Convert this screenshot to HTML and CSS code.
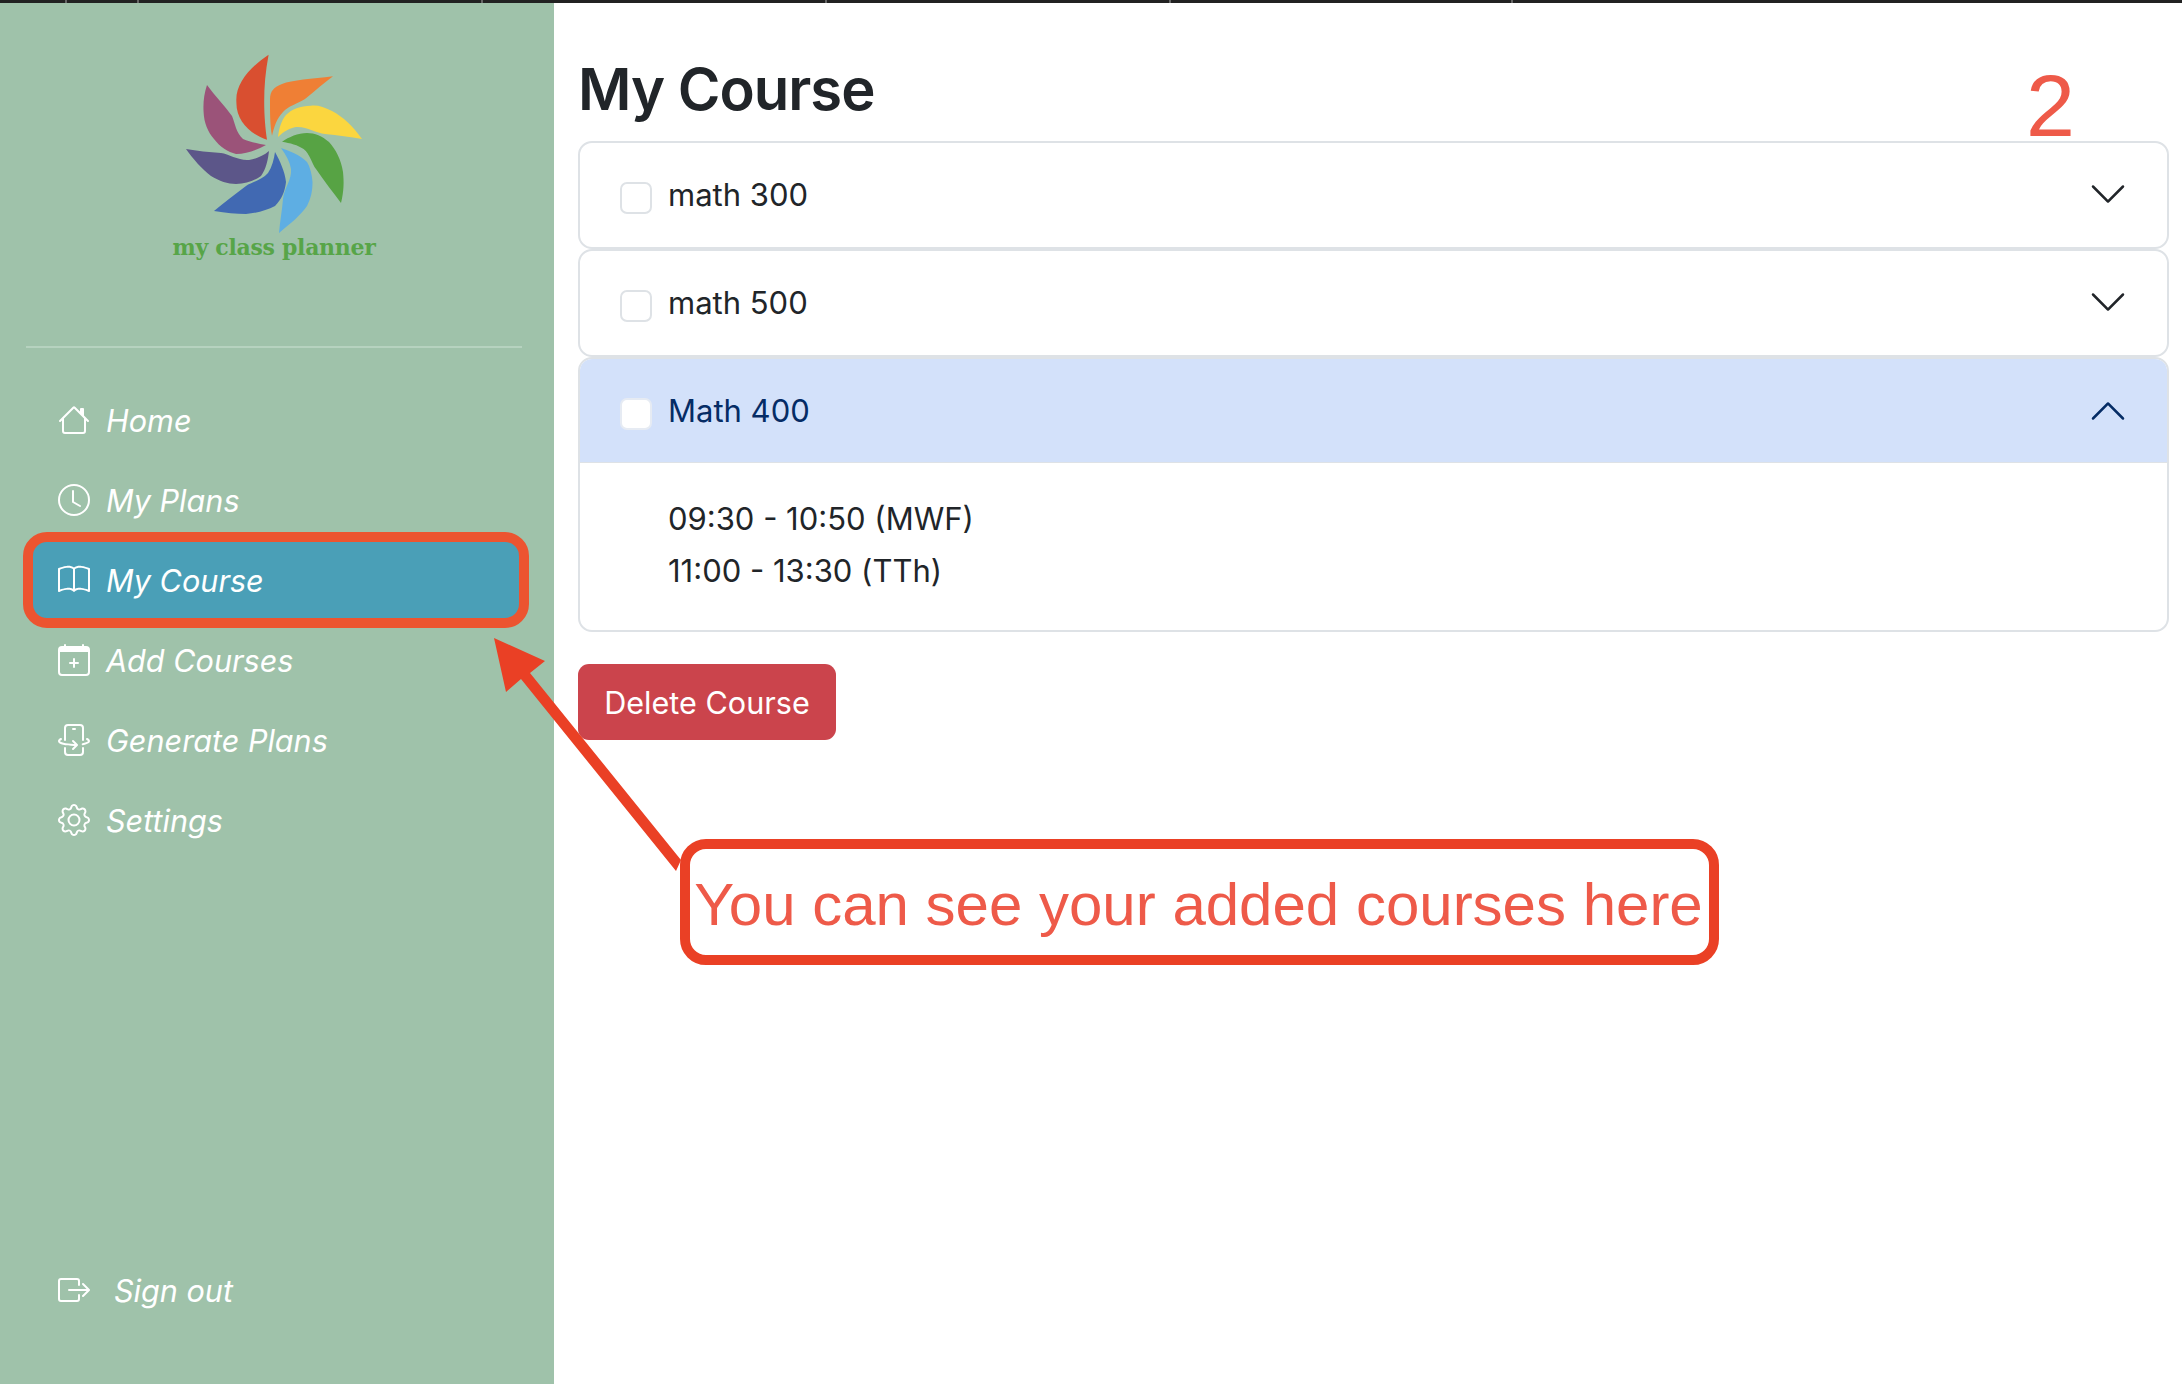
FILE: index.html
```html
<!DOCTYPE html>
<html lang="en">
<head>
<meta charset="utf-8">
<title>My Course</title>
<link rel="stylesheet" href="styles.css">
</head>
<body>
<div class="page">
  <div class="tabstrip"></div>
  <div class="shell">
    <aside class="sidebar">
      <div class="brand">
        <svg class="logo" viewBox="182 52 190 186" aria-hidden="true">
          <path fill="#d94f30" d="M268.6 55.7C250 68 235 85 236.4 103C236 122 250 135 267 140.7C264 120 262 90 268.6 55.7Z"/>
          <path fill="#ef7f35" d="M333 77.3C312 80 292 81 282 85C274 88 270 92 270 100C270 115 270 125 272 136.7C274 128 277 119 283 113C288 107 297 105 305 100C315 92 324 84 333 77.3Z"/>
          <path fill="#fbd63f" d="M362 140C352 126 343 118 332 112C324 108 318 106 311 106.7C300 107 292 110 286 116C281 122 279 130 278 138C284 132 290 129 296 128C306 127 316 134 325 135C338 136 350 138 362 140Z"/>
          <path fill="#57a344" d="M341 204C344 192 344 183 343 173C341 160 336 151 329 143C322 137 315 134 307 134C298 134 289 138 282 142.7C290 144 298 146 303.6 150C310 155 312 165 316 170C324 182 333 193 341 204Z"/>
          <path fill="#5eaee3" d="M279 234C291 224 301 216 307 207C311 199 312.5 192 312.5 183C312 175 310 168 307 163C300 156 290 152 281 149C286 156 290 163 291 170C292 181 284 189 283 200C282 212 280 222 279 234Z"/>
          <path fill="#4169b2" d="M214 212C226 214 236 215 246 215C258 214 267 211 275 207C282 200 285 192 286 183C285 173 280 162 275 153C274 160 272 168 268 174C262 181 252 183 246 187C235 195 224 204 214 212Z"/>
          <path fill="#5c5689" d="M186 150C193 160 202 170 211 177C219 182 228 185 236 185C246 185 254 182 261 177C266 170 268 161 269 152C263 157 256 160 249 161C239 162 229 155 221 154C209 153 197 152 186 150Z"/>
          <path fill="#9b5379" d="M207 86C204 95 203 104 203.6 113C204 124 208 133 214 140C220 148 228 153 236 155C247 155 257 151 266 146C259 145 250 143 243 140C236 134 235 124 232 117C224 106 215 97 207 86Z"/>
        </svg>
        <div class="brand-name">my class planner</div>
      </div>
      <nav class="nav">
        <a class="nav-item">
          <svg class="icon" viewBox="0 0 16 16"><path d="M8.707 1.5a1 1 0 0 0-1.414 0L.646 8.146a.5.5 0 0 0 .708.708L2 8.207V13.5A1.5 1.5 0 0 0 3.5 15h9a1.5 1.5 0 0 0 1.5-1.5V8.207l.646.647a.5.5 0 0 0 .708-.708L13 5.793V2.5a.5.5 0 0 0-.5-.5h-1a.5.5 0 0 0-.5.5v1.293zM13 7.207V13.5a.5.5 0 0 1-.5.5h-9a.5.5 0 0 1-.5-.5V7.207l5-5z"/></svg>
          <span>Home</span>
        </a>
        <a class="nav-item">
          <svg class="icon" viewBox="0 0 16 16"><path d="M8 3.5a.5.5 0 0 0-1 0V9a.5.5 0 0 0 .252.434l3.5 2a.5.5 0 0 0 .496-.868L8 8.71z"/><path d="M8 16A8 8 0 1 0 8 0a8 8 0 0 0 0 16m7-8A7 7 0 1 1 1 8a7 7 0 0 1 14 0"/></svg>
          <span>My Plans</span>
        </a>
        <a class="nav-item is-active">
          <svg class="icon" viewBox="0 0 16 16"><path d="M1 2.828c.885-.37 2.154-.769 3.388-.893 1.33-.134 2.458.063 3.112.752v9.746c-.935-.53-2.12-.603-3.213-.493-1.18.12-2.37.461-3.287.811zm7.5-.141c.654-.689 1.782-.886 3.112-.752 1.234.124 2.503.523 3.388.893v9.923c-.918-.35-2.107-.692-3.287-.81-1.094-.111-2.278-.039-3.213.492zM8 1.783C7.015.936 5.587.81 4.287.94c-1.514.153-3.042.672-3.994 1.105A.5.5 0 0 0 0 2.5v11a.5.5 0 0 0 .707.455c.882-.4 2.303-.881 3.68-1.02 1.409-.142 2.59.087 3.223.877a.5.5 0 0 0 .78 0c.633-.79 1.814-1.019 3.222-.877 1.378.139 2.8.62 3.681 1.02A.5.5 0 0 0 16 13.5v-11a.5.5 0 0 0-.293-.455c-.952-.433-2.48-.952-3.994-1.105C10.413.809 8.985.936 8 1.783"/></svg>
          <span>My Course</span>
        </a>
        <a class="nav-item">
          <svg class="icon" viewBox="0 0 16 16"><path d="M8 7a.5.5 0 0 1 .5.5V9H10a.5.5 0 0 1 0 1H8.5v1.5a.5.5 0 0 1-1 0V10H6a.5.5 0 0 1 0-1h1.5V7.5A.5.5 0 0 1 8 7"/><path d="M3.5 0a.5.5 0 0 1 .5.5V1h8V.5a.5.5 0 0 1 1 0V1h1a2 2 0 0 1 2 2v11a2 2 0 0 1-2 2H2a2 2 0 0 1-2-2V3a2 2 0 0 1 2-2h1V.5a.5.5 0 0 1 .5-.5M1 4v10a1 1 0 0 0 1 1h12a1 1 0 0 0 1-1V4z"/></svg>
          <span>Add Courses</span>
        </a>
        <a class="nav-item">
          <svg class="icon" viewBox="0 0 16 16"><path d="M11 1H5a1 1 0 0 0-1 1v6a.5.5 0 0 1-1 0V2a2 2 0 0 1 2-2h6a2 2 0 0 1 2 2v6a.5.5 0 0 1-1 0V2a1 1 0 0 0-1-1m1 13a1 1 0 0 1-1 1H5a1 1 0 0 1-1-1v-2a.5.5 0 0 0-1 0v2a2 2 0 0 0 2 2h6a2 2 0 0 0 2-2v-2a.5.5 0 0 0-1 0zM1.713 7.954a.5.5 0 1 0-.419-.908c-.347.16-.654.348-.882.57C.184 7.842 0 8.139 0 8.5c0 .546.408.94.823 1.201.44.278 1.043.51 1.745.696C3.978 10.773 5.898 11 8 11q.148 0 .294-.002l-1.148 1.148a.5.5 0 0 0 .708.708l2-2a.5.5 0 0 0 0-.708l-2-2a.5.5 0 1 0-.708.708l1.145 1.144L8 10c-2.04 0-3.87-.221-5.174-.569-.656-.175-1.151-.374-1.47-.575C1.012 8.639 1 8.506 1 8.5c0-.003 0-.059.112-.17.115-.112.31-.242.6-.376Zm12.993-.908a.5.5 0 0 0-.419.908c.292.134.486.264.6.377.113.11.113.167.113.169 0 .003 0 .14-.356.338-.316.2-.81.4-1.466.575-.29.076-.604.147-.937.212a.5.5 0 1 0 .19.982c.35-.068.68-.143.989-.225.702-.186 1.304-.418 1.745-.696.414-.26.822-.655.822-1.201 0-.36-.184-.658-.412-.884-.228-.222-.535-.41-.882-.57ZM7 2.5a.5.5 0 0 1 .5-.5h1a.5.5 0 0 1 0 1h-1a.5.5 0 0 1-.5-.5"/></svg>
          <span>Generate Plans</span>
        </a>
        <a class="nav-item">
          <svg class="icon" viewBox="0 0 16 16"><path d="M8 4.754a3.246 3.246 0 1 0 0 6.492 3.246 3.246 0 0 0 0-6.492M5.754 8a2.246 2.246 0 1 1 4.492 0 2.246 2.246 0 0 1-4.492 0"/><path d="M9.796 1.343c-.527-1.79-3.065-1.79-3.592 0l-.094.319a.873.873 0 0 1-1.255.52l-.292-.16c-1.64-.892-3.433.902-2.54 2.541l.159.292a.873.873 0 0 1-.52 1.255l-.319.094c-1.79.527-1.79 3.065 0 3.592l.319.094a.873.873 0 0 1 .52 1.255l-.16.292c-.892 1.64.901 3.434 2.541 2.54l.292-.159a.873.873 0 0 1 1.255.52l.094.319c.527 1.79 3.065 1.79 3.592 0l.094-.319a.873.873 0 0 1 1.255-.52l.292.16c1.64.893 3.434-.902 2.54-2.541l-.159-.292a.873.873 0 0 1 .52-1.255l.319-.094c1.79-.527 1.79-3.065 0-3.592l-.319-.094a.873.873 0 0 1-.52-1.255l.16-.292c.893-1.64-.902-3.433-2.541-2.54l-.292.159a.873.873 0 0 1-1.255-.52zm-2.633.283c.246-.835 1.428-.835 1.674 0l.094.319a1.873 1.873 0 0 0 2.693 1.115l.291-.16c.764-.415 1.6.42 1.184 1.185l-.159.292a1.873 1.873 0 0 0 1.116 2.692l.318.094c.835.246.835 1.428 0 1.674l-.319.094a1.873 1.873 0 0 0-1.115 2.693l.16.291c.415.764-.42 1.6-1.185 1.184l-.291-.159a1.873 1.873 0 0 0-2.693 1.116l-.094.318c-.246.835-1.428.835-1.674 0l-.094-.319a1.873 1.873 0 0 0-2.692-1.115l-.292.16c-.764.415-1.6-.42-1.184-1.185l.159-.291A1.873 1.873 0 0 0 1.945 8.93l-.319-.094c-.835-.246-.835-1.428 0-1.674l.319-.094A1.873 1.873 0 0 0 3.06 4.377l-.16-.292c-.415-.764.42-1.6 1.185-1.184l.292.159a1.873 1.873 0 0 0 2.692-1.115z"/></svg>
          <span>Settings</span>
        </a>
      </nav>
      <a class="nav-item signout">
        <svg class="icon" viewBox="0 0 16 16"><path d="M10 12.5a.5.5 0 0 1-.5.5h-8a.5.5 0 0 1-.5-.5v-9a.5.5 0 0 1 .5-.5h8a.5.5 0 0 1 .5.5v2a.5.5 0 0 0 1 0v-2A1.5 1.5 0 0 0 9.5 2h-8A1.5 1.5 0 0 0 0 3.5v9A1.5 1.5 0 0 0 1.5 14h8a1.5 1.5 0 0 0 1.5-1.5v-2a.5.5 0 0 0-1 0z"/><path d="M15.854 8.354a.5.5 0 0 0 0-.708l-3-3a.5.5 0 0 0-.708.708L14.293 7.5H5.5a.5.5 0 0 0 0 1h8.793l-2.147 2.146a.5.5 0 0 0 .708.708z"/></svg>
        <span>Sign out</span>
      </a>
    </aside>
    <main class="main">
      <h1 class="title">My Course</h1>
      <div class="accordion">
        <div class="acc-item">
          <div class="acc-header">
            <span class="check"></span>
            <span class="acc-label">math 300</span>
            <svg class="chev" viewBox="0 0 16 16"><path d="M1.646 4.646a.5.5 0 0 1 .708 0L8 10.293l5.646-5.647a.5.5 0 0 1 .708.708l-6 6a.5.5 0 0 1-.708 0l-6-6a.5.5 0 0 1 0-.708z"/></svg>
          </div>
        </div>
        <div class="acc-item">
          <div class="acc-header">
            <span class="check"></span>
            <span class="acc-label">math 500</span>
            <svg class="chev" viewBox="0 0 16 16"><path d="M1.646 4.646a.5.5 0 0 1 .708 0L8 10.293l5.646-5.647a.5.5 0 0 1 .708.708l-6 6a.5.5 0 0 1-.708 0l-6-6a.5.5 0 0 1 0-.708z"/></svg>
          </div>
        </div>
        <div class="acc-item is-open">
          <div class="acc-header">
            <span class="check"></span>
            <span class="acc-label">Math 400</span>
            <svg class="chev" viewBox="0 0 16 16"><path d="M1.646 4.646a.5.5 0 0 1 .708 0L8 10.293l5.646-5.647a.5.5 0 0 1 .708.708l-6 6a.5.5 0 0 1-.708 0l-6-6a.5.5 0 0 1 0-.708z"/></svg>
          </div>
          <div class="acc-body">
            <div>09:30 - 10:50 (MWF)</div>
            <div>11:00 - 13:30 (TTh)</div>
          </div>
        </div>
      </div>
      <button class="btn-delete" type="button">Delete Course</button>
    </main>
  </div>

  <div class="mark-number">2</div>
  <div class="mark-ring"></div>
  <svg class="mark-arrow" viewBox="0 0 2182 1384" aria-hidden="true">
    <polygon points="494,638 545,661 530,673 681,860 676,871 521,679 506,692"/>
  </svg>
  <div class="mark-callout">You can see your added courses here</div>
</div>
</body>
</html>
```

FILE: styles.css
```css
* { box-sizing: border-box; }
html, body { margin: 0; padding: 0; }
body { background: #fff; font-family: "Inter", "Liberation Sans", sans-serif; color: #212529; }

.page { position: relative; width: 2182px; height: 1384px; overflow: hidden; display: flex; flex-direction: column; }

.tabstrip {
  height: 3px;
  flex: none;
  background-color: #222;
  background-image: linear-gradient(#666, #666), linear-gradient(#666, #666), linear-gradient(#666, #666), linear-gradient(#666, #666), linear-gradient(#666, #666), linear-gradient(#666, #666);
  background-size: 2px 100%;
  background-repeat: no-repeat;
  background-position: 65px 0, 137px 0, 481px 0, 825px 0, 1169px 0, 1511px 0;
}
.shell { flex: 1; display: flex; min-height: 0; }

.sidebar { width: 554px; flex: none; background: #9fc2aa; display: flex; flex-direction: column; padding: 48px 32px 74px 26px; }
.brand { display: flex; flex-direction: column; align-items: center; height: 297px; border-bottom: 2px solid #b6d2bf; flex: none; }
.logo { width: 190px; height: 186px; flex: none; margin-left: 5px; }
.brand-name { font-family: "DejaVu Serif", serif; font-weight: 700; font-size: 22px; line-height: 24px; margin-top: -2px; color: #57a548; letter-spacing: -0.3px; white-space: nowrap; }

.nav { display: flex; flex-direction: column; margin-top: 32px; }
.nav-item { display: flex; align-items: center; height: 80px; padding-left: 32px; gap: 16px; color: #fff; font-style: italic; font-size: 30.6px; }
.nav-item.is-active { background: #4a9fb7; border-radius: 8px; }
.icon { width: 32px; height: 32px; fill: #fff; flex: none; }
.signout { margin-top: auto; height: 40px; gap: 24px; }

.main { flex: 1; min-width: 0; padding: 0 13px 0 24px; }
.title { margin: 0; font-size: 58px; font-weight: 600; letter-spacing: -1px; line-height: 172px; height: 138px; color: #212529; }
.accordion { display: flex; flex-direction: column; }
.acc-item { border: 2px solid #dee2e6; border-radius: 14px; background: #fff; overflow: hidden; }
.acc-header { display: flex; align-items: center; height: 104px; padding: 0 39px 2px 40px; }
.check { width: 32px; height: 32px; border: 2px solid #dee2e6; border-radius: 7px; background: #fff; flex: none; margin-top: 7px; }
.acc-label { margin-left: 16px; font-size: 31px; flex: 1; }
.chev { width: 40px; height: 40px; fill: #212529; flex: none; }
.is-open .acc-header { background: #d3e1fa; color: #052c65; height: 103px; padding-bottom: 0; }
.is-open .chev { fill: #052c65; transform: scaleY(-1); }
.is-open .check { border-color: #e6ebf3; }
.acc-body { border-top: 1px solid #dee2e6; padding: 30px 40px 33px 88px; font-size: 31px; line-height: 52px; }

.btn-delete { display: block; margin-top: 32px; width: 258px; height: 76px; border: 0; border-radius: 11px; background: #cb444c; color: #fff; font: 400 30.6px "Inter", "Liberation Sans", sans-serif; padding: 0; }

.mark-number { position: absolute; left: 2026px; top: 56px; font-family: "Liberation Sans", sans-serif; font-size: 88px; line-height: 100px; color: #ee5a49; }
.mark-ring { position: absolute; left: 23px; top: 532px; width: 506px; height: 96px; border: 10px solid #ec5430; border-radius: 24px; }
.mark-arrow { position: absolute; left: 0; top: 0; width: 2182px; height: 1384px; fill: #ea4025; pointer-events: none; }
.mark-callout { position: absolute; left: 680px; top: 839px; width: 1039px; height: 126px; border: 10px solid #ea4025; border-radius: 26px; background: #fff; font-family: "Liberation Sans", sans-serif; font-size: 60px; line-height: 112px; text-align: center; color: #ee5a49; white-space: nowrap; text-indent: -2px; }
```
